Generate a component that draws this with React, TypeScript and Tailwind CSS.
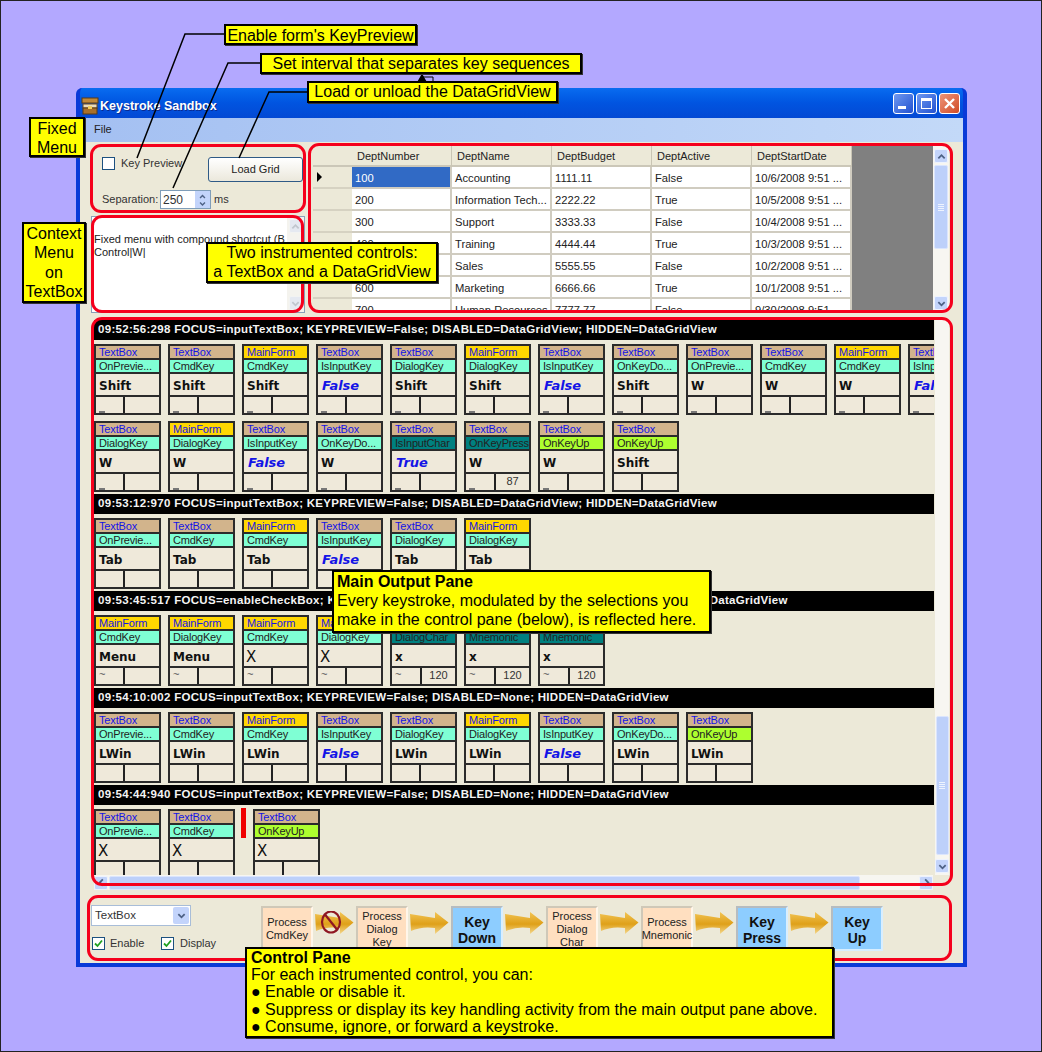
const ui = "font-['Liberation_Sans',sans-serif]";

type Card = { src?: "T" | "M"; m: string; k: string; low?: string; num?: string; tone?: "key" | "char" | "up" };

const T = (m: string, k: string, low?: string, num?: string, tone?: Card["tone"]): Card => ({ src: "T", m, k, low, num, tone });
const M = (m: string, k: string, low?: string, num?: string, tone?: Card["tone"]): Card => ({ src: "M", m, k, low, num, tone });

function methodTone(c: Card) {
  if (c.tone === "char") return "bg-[#008080]";
  if (c.tone === "up") return "bg-[#adff2f]";
  return "bg-[#7fffd4]";
}

function keyStyle(k: string) {
  if (k === "False" || k === "True") return "font-bold italic text-[13px] text-[#1414e6] pl-[4px]";
  if (k === "X") return "font-normal text-[15px] text-[#111] pl-[2px]";
  return "font-bold text-[12px] text-[#111] pl-[3px]";
}

function LogCard({ c }: { c: Card }) {
  return (
    <div className="w-[67px] h-[71px] shrink-0 border-2 border-[#2b2b2b] bg-[#efe9da] flex flex-col overflow-hidden">
      <div className={`h-[12px] shrink-0 pl-[3px] leading-[12px] text-[11px] tracking-[-0.15px] text-[#1414e6] ${c.src === "M" ? "bg-[#ffd700]" : "bg-[#d2b48c]"}`}>
        {c.src === "M" ? "MainForm" : "TextBox"}
      </div>
      <div className={`h-[14px] shrink-0 pl-[3px] leading-[13px] text-[11px] tracking-[-0.2px] text-[#222] whitespace-nowrap border-t-2 border-[#2b2b2b] ${methodTone(c)}`}>{c.m}</div>
      <div className={`h-[23px] shrink-0 border-t-2 border-[#2b2b2b] leading-[24px] whitespace-nowrap font-['DejaVu_Sans',sans-serif] ${keyStyle(c.k)}`}>
        {c.k}
      </div>
      <div className="flex-1 flex border-t-2 border-[#2b2b2b]">
        <div className={`${c.num ? "w-[30px]" : "w-[29px]"} shrink-0 border-r-2 border-[#222] relative text-[11px] text-[#555]`}>
          {c.low === "_" && <span className="absolute left-[3px] bottom-0 w-[6px] h-[2px] bg-[#777]" />}
          {c.low === "~" && <span className="absolute left-[3px] top-[-2px]">~</span>}
        </div>
        <div className="flex-1 text-center text-[11px] leading-[15px] text-[#333]">{c.num}</div>
      </div>
    </div>
  );
}

function LogBar({ text }: { text: string }) {
  return (
    <div className="h-[20px] shrink-0 bg-black text-[#f4f4f4] font-bold text-[11.5px] leading-[19px] pl-[4px] tracking-[0.3px] whitespace-nowrap">
      {text}
    </div>
  );
}

const rowOne = [
  T("OnPrevie...", "Shift", "_"), T("CmdKey", "Shift", "_"), M("CmdKey", "Shift", "_"), T("IsInputKey", "False", "_"),
  T("DialogKey", "Shift", "_"), M("DialogKey", "Shift", "_"), T("IsInputKey", "False", "_"), T("OnKeyDo...", "Shift", "_"),
  T("OnPrevie...", "W", "_"), T("CmdKey", "W", "_"), M("CmdKey", "W", "_"), T("IsInputKey", "False", "_"),
];
const rowTwo = [
  T("DialogKey", "W", "_"), M("DialogKey", "W", "_"), T("IsInputKey", "False", "_"), T("OnKeyDo...", "W", "_"),
  T("IsInputChar", "True", "_", undefined, "char"), T("OnKeyPress", "W", "_", "87", "char"),
  T("OnKeyUp", "W", "_", undefined, "up"), T("OnKeyUp", "Shift", undefined, undefined, "up"),
];
const tabRow = [T("OnPrevie...", "Tab"), T("CmdKey", "Tab"), M("CmdKey", "Tab"), T("IsInputKey", "False"), T("DialogKey", "Tab"), M("DialogKey", "Tab")];
const menuRow = [
  M("CmdKey", "Menu", "~"), M("DialogKey", "Menu", "~"), M("CmdKey", "X", "~"), M("DialogKey", "X", "~"),
  M("DialogChar", "x", "~", "120", "char"), M("Mnemonic", "x", "~", "120", "char"), M("Mnemonic", "x", "~", "120", "char"),
];
const winRow = [
  T("OnPrevie...", "LWin"), T("CmdKey", "LWin"), M("CmdKey", "LWin"), T("IsInputKey", "False"), T("DialogKey", "LWin"),
  M("DialogKey", "LWin"), T("IsInputKey", "False"), T("OnKeyDo...", "LWin"), T("OnKeyUp", "LWin", undefined, undefined, "up"),
];

function CardRow({ cards, className = "" }: { cards: Card[]; className?: string }) {
  return (
    <div className={`flex gap-[7px] shrink-0 ${className}`}>
      {cards.map((c, i) => (
        <LogCard key={i} c={c} />
      ))}
    </div>
  );
}

const grid = [
  ["100", "Accounting", "1111.11", "False", "10/6/2008 9:51 ..."],
  ["200", "Information Tech...", "2222.22", "True", "10/5/2008 9:51 ..."],
  ["300", "Support", "3333.33", "False", "10/4/2008 9:51 ..."],
  ["400", "Training", "4444.44", "True", "10/3/2008 9:51 ..."],
  ["500", "Sales", "5555.55", "False", "10/2/2008 9:51 ..."],
  ["600", "Marketing", "6666.66", "True", "10/1/2008 9:51 ..."],
  ["700", "Human Resources", "7777.77", "False", "9/30/2008 9:51 ..."],
];

function Chevron({ up, size = 9 }: { up?: boolean; size?: number }) {
  return (
    <svg width={size} height={size} viewBox="0 0 10 10" fill="none">
      <path d={up ? "M1.5 7 L5 3.5 L8.5 7" : "M1.5 3.5 L5 7 L8.5 3.5"} stroke="#4d6185" strokeWidth="2" />
    </svg>
  );
}

function ScrollBtn({ up, side }: { up?: boolean; side?: "l" | "r" }) {
  return (
    <div className="w-[14px] h-[14px] shrink-0 rounded-[2px] bg-[#c3d4fb] border border-[#eef3fe] flex items-center justify-center">
      <span className={side === "l" ? "rotate-90 flex" : side === "r" ? "-rotate-90 flex" : "flex"}>
        <Chevron up={up} />
      </span>
    </div>
  );
}

function Grip() {
  return (
    <div className="flex flex-col gap-[1px] w-[6px]">
      <span className="h-px bg-[#eef3fe]" />
      <span className="h-px bg-[#eef3fe]" />
      <span className="h-px bg-[#eef3fe]" />
      <span className="h-px bg-[#eef3fe]" />
    </div>
  );
}

function Check({ checked, className = "" }: { checked?: boolean; className?: string }) {
  return (
    <span className={`w-[13px] h-[13px] shrink-0 border border-[#1c5180] bg-white flex items-center justify-center ${className}`}>
      {checked && (
        <svg width="9" height="9" viewBox="0 0 9 9" fill="none">
          <path d="M1 4.5 L3.5 7 L8 1.5" stroke="#21a121" strokeWidth="1.8" />
        </svg>
      )}
    </span>
  );
}

function FlowBox({ lines, strong }: { lines: string[]; strong?: boolean }) {
  return (
    <div
      className={`w-[52px] h-[45px] shrink-0 border-2 flex flex-col items-center justify-center text-center ${
        strong
          ? "bg-[#8dcdff] border-t-[#b6bcc0] border-l-[#b6bcc0] border-r-[#d8eeff] border-b-[#d8eeff] pt-[2px] font-bold text-[14px] leading-[16px] text-[#111]"
          : "bg-[#ffdfc0] border-t-[#cfc8b8] border-l-[#cfc8b8] border-r-[#fff6ea] border-b-[#fff6ea] pt-[1px] text-[11px] leading-[13px] text-[#222]"
      }`}
    >
      {lines.map((l) => (
        <span key={l}>{l}</span>
      ))}
    </div>
  );
}

function FlowArrow({ blocked }: { blocked?: boolean }) {
  return (
    <div className="w-[43px] h-[45px] shrink-0 flex justify-center pt-[5px]">
      <svg width="39" height="24" viewBox="0 0 39 24">
        <defs>
          <linearGradient id="gold" x1="0" y1="0" x2="0" y2="1">
            <stop offset="0" stopColor="#f2c454" />
            <stop offset="0.55" stopColor="#dfa019" />
            <stop offset="1" stopColor="#f4d78c" />
          </linearGradient>
        </defs>
        <path d="M0 3 L25 7 L25 1 L38.5 11.5 L25 23 L25 17 Q12 15 1 20 Z" fill="url(#gold)" />
        {blocked && (
          <g fill="none" stroke="#8f1722" strokeWidth="2.2">
            <ellipse cx="16" cy="11" rx="9" ry="10.5" />
            <path d="M10 3.5 L22 18.5" />
          </g>
        )}
      </svg>
    </div>
  );
}

const note = "absolute bg-[#ffff00] border-2 border-black text-black text-[16px] font-['Liberation_Sans',sans-serif] shadow-[1px_1px_0_#333]";
const outline = "absolute border-[3px] border-[#f5001c] rounded-[11px] pointer-events-none";

export default function App() {
  return (
    <div className={`relative w-[1042px] h-[1052px] overflow-hidden bg-[#b3a8ff] border border-[#222] pt-[87px] pl-[75px] ${ui}`}>
      {/* the form itself */}
      <div className="w-[891px] h-[879px] flex flex-col rounded-t-[6px] bg-[#0831d9] border-x-4 border-b-4 border-[#0a3ad8] overflow-hidden">
        <div className="h-[30px] shrink-0 -mx-[4px] px-[5px] flex items-center bg-gradient-to-b from-[#0a6cf0] via-[#0154e0] to-[#0349d4]">
          <svg width="18" height="18" viewBox="0 0 18 18" className="mt-[5px]">
            <rect x="1" y="1" width="16" height="5" fill="#c08a3a" stroke="#5a3a14" />
            <rect x="2" y="7" width="14" height="4" fill="#e9dcc0" stroke="#6b4a20" />
            <rect x="2" y="11" width="14" height="6" fill="#a8702a" stroke="#5a3a14" />
            <rect x="7" y="9" width="4" height="3" fill="#f2d060" />
          </svg>
          <span className="ml-[1px] mt-[6px] text-white font-bold text-[12.5px] [text-shadow:1px_1px_0_#0a2a90]">Keystroke Sandbox</span>
          <div className="ml-auto mr-[2px] flex gap-[2px]">
            <div className="w-[21px] h-[21px] rounded-[3px] border border-white bg-gradient-to-br from-[#6f98f0] to-[#2350d0] flex items-end p-[4px]">
              <span className="w-[8px] h-[3px] bg-white" />
            </div>
            <div className="w-[21px] h-[21px] rounded-[3px] border border-white bg-gradient-to-br from-[#6f98f0] to-[#2350d0] p-[4px]">
              <div className="w-full h-full border border-t-[3px] border-white" />
            </div>
            <div className="w-[21px] h-[21px] rounded-[3px] border border-white bg-gradient-to-br from-[#ee9478] to-[#cf4a22] flex items-center justify-center">
              <svg width="13" height="13" viewBox="0 0 13 13">
                <path d="M2 2 L11 11 M11 2 L2 11" stroke="white" strokeWidth="2.4" />
              </svg>
            </div>
          </div>
        </div>

        <div className="h-[24px] shrink-0 pl-[14px] leading-[23px] text-[11px] text-[#222] bg-gradient-to-r from-[#a4c0f2] to-[#c3d9f8]">File</div>

        <div className="flex-1 min-h-0 flex flex-col bg-[#ece9d8] pl-[11px] pr-[14px] pt-[4px]">
          <div className="h-[170px] shrink-0 flex gap-[8px]">
            <div className="w-[214px] shrink-0 flex flex-col text-[11px] text-[#333]">
              <div className="h-[70px] shrink-0 relative pl-[11px] pt-[11px]">
                <div className="flex items-center h-[13px]">
                  <Check />
                  <span className="ml-[6px]">Key Preview</span>
                </div>
                <button className="absolute left-[117px] top-[11px] w-[95px] h-[25px] rounded-[3px] border border-[#2f5a86] bg-gradient-to-b from-white to-[#ebe8dc] text-[11px] text-[#222]">
                  Load Grid
                </button>
                <div className="flex items-center mt-[20px]">
                  <span className="w-[58px]">Separation:</span>
                  <div className="w-[51px] h-[19px] border border-[#7f9db9] bg-white flex items-center justify-between pl-[2px]">
                    <span className="text-[12px]">250</span>
                    <div className="w-[15px] h-full bg-[#c3d4fb] flex flex-col items-center justify-center">
                      <Chevron up size={7} />
                      <Chevron size={7} />
                    </div>
                  </div>
                  <span className="ml-[3px]">ms</span>
                </div>
              </div>
              <div className="h-[97px] shrink-0 bg-white border border-[#8aa0b8] flex">
                <div className="flex-1 pl-[2px] pt-[16px] leading-[13px] text-[#222] whitespace-nowrap overflow-hidden">
                  Fixed menu with compound shortcut (B
                  <br />
                  Control|W|
                </div>
                <div className="w-[17px] shrink-0 flex flex-col justify-between items-center py-[2px] bg-[#f4f3ee]">
                  <span className="opacity-30 flex"><ScrollBtn up /></span>
                  <span className="opacity-30 flex"><ScrollBtn /></span>
                </div>
              </div>
            </div>

            <div className="flex-1 h-[165px] flex bg-[#808080] overflow-hidden">
              <div className="w-[39px] shrink-0 bg-[#ece9d8] flex flex-col">
                <div className="h-[21px] shrink-0 border-b-2 border-[#cbc7b8]" />
                {grid.map((r, i) => (
                  <div key={r[0]} className="h-[22px] shrink-0 border-b-2 border-[#d6d2c2] flex items-center pl-[4px]">
                    {i === 0 && <span className="w-0 h-0 border-y-[5px] border-y-transparent border-l-[5px] border-l-black" />}
                  </div>
                ))}
              </div>
              <div className="w-[500px] shrink-0 flex flex-col text-[11.2px] text-[#222]">
                <div className="h-[21px] shrink-0 grid grid-cols-5 bg-[#ece9d8] border-b-2 border-[#cbc7b8] text-[11px]">
                  {["DeptNumber", "DeptName", "DeptBudget", "DeptActive", "DeptStartDate"].map((h) => (
                    <div key={h} className="pl-[5px] leading-[21px] border-r border-[#c9c5b4]">{h}</div>
                  ))}
                </div>
                {grid.map((r, i) => (
                  <div key={r[0]} className="h-[22px] shrink-0 grid grid-cols-5 bg-white border-b-2 border-[#d0ccc0]">
                    {r.map((v, j) => (
                      <div
                        key={j}
                        className={`pl-[3px] leading-[23px] whitespace-nowrap overflow-hidden border-r-2 border-[#d0ccc0] ${
                          i === 0 && j === 0 ? "bg-[#316ac5] text-white" : ""
                        }`}
                      >
                        {v}
                      </div>
                    ))}
                  </div>
                ))}
              </div>
              <div className="flex-1" />
              <div className="w-[16px] shrink-0 bg-[#f7f6f1] flex flex-col items-center pt-[3px] pb-[1px]">
                <ScrollBtn up />
                <div className="w-[14px] h-[84px] mt-[2px] rounded-[2px] bg-[#bdd0fa] border border-[#dbe5fd] flex items-center justify-center">
                  <Grip />
                </div>
                <div className="flex-1" />
                <ScrollBtn />
              </div>
            </div>
          </div>

          <div className="h-[570px] shrink-0 mt-[4px] pl-[3px] flex flex-col">
            <div className="flex-1 min-h-0 flex">
              <div className="flex-1 min-w-0 flex flex-col overflow-hidden">
                <LogBar text="09:52:56:298 FOCUS=inputTextBox; KEYPREVIEW=False; DISABLED=DataGridView; HIDDEN=DataGridView" />
                <CardRow cards={rowOne} className="mt-[4px]" />
                <CardRow cards={rowTwo} className="mt-[6px]" />
                <div className="mt-[2px]"><LogBar text="09:53:12:970 FOCUS=inputTextBox; KEYPREVIEW=False; DISABLED=DataGridView; HIDDEN=DataGridView" /></div>
                <CardRow cards={tabRow} className="mt-[4px]" />
                <div className="mt-[2px]"><LogBar text="09:53:45:517 FOCUS=enableCheckBox; KEYPREVIEW=False; DISABLED=TextBox,DataGridView; HIDDEN=DataGridView" /></div>
                <CardRow cards={menuRow} className="mt-[4px]" />
                <div className="mt-[2px]"><LogBar text="09:54:10:002 FOCUS=inputTextBox; KEYPREVIEW=False; DISABLED=None; HIDDEN=DataGridView" /></div>
                <CardRow cards={winRow} className="mt-[4px]" />
                <div className="mt-[2px]"><LogBar text="09:54:44:940 FOCUS=inputTextBox; KEYPREVIEW=False; DISABLED=None; HIDDEN=DataGridView" /></div>
                <div className="flex mt-[4px] shrink-0">
                  <LogCard c={T("OnPrevie...", "X")} />
                  <div className="w-[7px]" />
                  <LogCard c={T("CmdKey", "X")} />
                  <div className="w-[6px]" />
                  <div className="w-[5px] h-[30px] -mt-[1px] bg-[#f00000]" />
                  <div className="w-[7px]" />
                  <LogCard c={T("OnKeyUp", "X", undefined, undefined, "up")} />
                </div>
              </div>
              <div className="w-[14px] ml-[1px] shrink-0 bg-[#f7f6f1] flex flex-col items-center">
                <div className="h-[396px] shrink-0" />
                <div className="w-[13px] flex-1 mb-[4px] rounded-[2px] bg-[#bdd0fa] border border-[#dbe5fd] flex items-center justify-center">
                  <Grip />
                </div>
                <ScrollBtn />
                <div className="h-[2px] shrink-0" />
              </div>
            </div>
            <div className="h-[15px] shrink-0 flex bg-[#f7f6f1] items-center">
              <ScrollBtn side="l" />
              <div className="w-[751px] h-[14px] rounded-[2px] bg-[#bdd0fa] border border-[#dbe5fd] ml-[1px]" />
              <div className="flex-1" />
              <ScrollBtn side="r" />
              <div className="w-[16px] h-full bg-[#ece9d8]" />
            </div>
          </div>

          <div className="mt-[8px] flex">
            <div className="w-[170px] shrink-0 pt-[7px] text-[11px] text-[#333]">
              <div className="w-[100px] h-[21px] bg-white border border-[#a8bdd8] flex items-center justify-between pl-[3px] pr-[1px]">
                <span className="text-[11.5px]">TextBox</span>
                <span className="w-[16px] h-[17px] rounded-[2px] bg-[#c3d4fb] flex items-center justify-center"><Chevron /></span>
              </div>
              <div className="flex items-center mt-[9px] pl-[1px]">
                <Check checked />
                <span className="ml-[5px] w-[51px]">Enable</span>
                <Check checked />
                <span className="ml-[6px]">Display</span>
              </div>
            </div>
            <div className="flex pt-[8px]">
              <FlowBox lines={["Process", "CmdKey"]} />
              <FlowArrow blocked />
              <FlowBox lines={["Process", "Dialog", "Key"]} />
              <FlowArrow />
              <FlowBox strong lines={["Key", "Down"]} />
              <FlowArrow />
              <FlowBox lines={["Process", "Dialog", "Char"]} />
              <FlowArrow />
              <FlowBox lines={["Process", "Mnemonic"]} />
              <FlowArrow />
              <FlowBox strong lines={["Key", "Press"]} />
              <FlowArrow />
              <FlowBox strong lines={["Key", "Up"]} />
            </div>
          </div>
        </div>
      </div>

      {/* red outlines drawn over the form */}
      <div className={`${outline} left-[89px] top-[143px] w-[216px] h-[69px]`} />
      <div className={`${outline} left-[90px] top-[214px] w-[213px] h-[98px]`} />
      <div className={`${outline} left-[307px] top-[142px] w-[645px] h-[170px]`} />
      <div className={`${outline} left-[90px] top-[316px] w-[862px] h-[569px]`} />
      <div className={`${outline} left-[86px] top-[894px] w-[865px] h-[66px]`} />

      {/* leader lines */}
      <svg className="absolute left-0 top-0 pointer-events-none" width="1042" height="1052" fill="none" stroke="black" strokeWidth="1.5">
        <path d="M223 33 H184 L136 157" />
        <path d="M260 62 H227 L172 187" />
        <path d="M306 91 H268 L238 157" />
        <path d="M432 82 V76 H421" strokeWidth="1" />
        <path d="M417 81 L421 74 L425 81 Z" fill="black" />
      </svg>

      {/* callouts */}
      <div className={`${note} left-[223px] top-[23px] w-[193px] h-[21px] leading-[19px] text-center`}>Enable form's KeyPreview</div>
      <div className={`${note} left-[259px] top-[52px] w-[322px] h-[21px] leading-[18px] text-center`}>Set interval that separates key sequences</div>
      <div className={`${note} left-[306px] top-[80px] w-[251px] h-[22px] leading-[18px] text-center`}>Load or unload the DataGridView</div>
      <div className={`${note} left-[28px] top-[116px] w-[56px] h-[40px] leading-[19px] text-center`}>Fixed<br />Menu</div>
      <div className={`${note} left-[21px] top-[221px] w-[64px] h-[81px] leading-[19.3px] text-center`}>Context<br />Menu<br />on<br />TextBox</div>
      <div className={`${note} left-[205px] top-[241px] w-[232px] h-[41px] leading-[18.5px] text-center`}>Two instrumented controls:<br />a TextBox and a DataGridView</div>
      <div className={`${note} left-[331px] top-[569px] w-[379px] h-[63px] leading-[19px] pl-[3px]`}>
        <b>Main Output Pane</b><br />Every keystroke, modulated by the selections you<br />make in the control pane (below), is reflected here.
      </div>
      <div className={`${note} left-[244px] top-[946px] w-[589px] h-[91px] leading-[17.2px] pl-[4px]`}>
        <b>Control Pane</b><br />For each instrumented control, you can:<br />● Enable or disable it.<br />● Suppress or display its key handling activity from the main output pane above.<br />● Consume, ignore, or forward a keystroke.
      </div>
    </div>
  );
}
